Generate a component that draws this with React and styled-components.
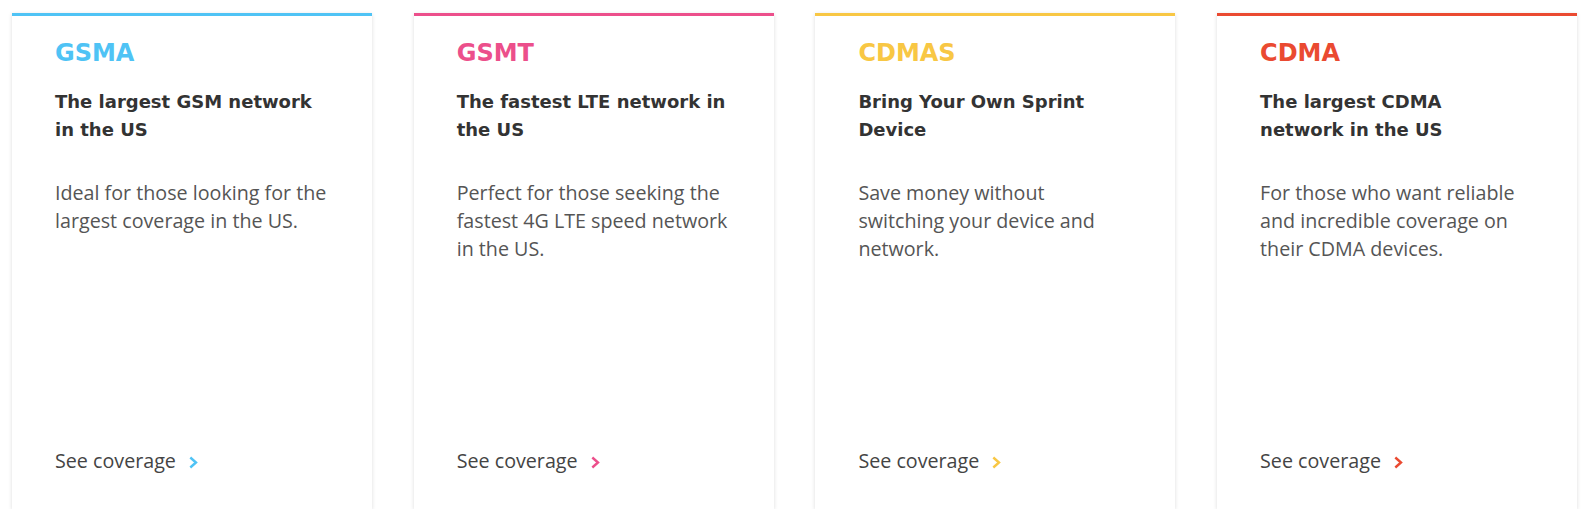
import React from 'react'
import styled, { createGlobalStyle } from 'styled-components'

const GlobalStyle = createGlobalStyle`
  body {
    margin: 0;
    background: #fff;
  }
`

const Row = styled.div`
  display: grid;
  grid-template-columns: repeat(4, 360px);
  column-gap: 41.7px;
  padding: 13px 12px 0 12px;
`

const Card = styled.div`
  box-sizing: border-box;
  height: 496px;
  display: flex;
  flex-direction: column;
  padding: 22px 30px 34px 43px;
  background: #fff;
  border-top: 3px solid ${(p) => p.accent};
  box-shadow: 0 1px 4px rgba(0, 0, 0, 0.14);
`

const Title = styled.div`
  font-family: "DejaVu Sans", sans-serif;
  font-weight: 700;
  font-size: 24px;
  line-height: 30px;
  color: ${(p) => p.accent};
`

const Heading = styled.div`
  margin-top: 20px;
  font-family: "DejaVu Sans", sans-serif;
  font-weight: 700;
  font-size: 18px;
  line-height: 28px;
  color: #333;
  white-space: nowrap;
`

const Text = styled.p`
  margin: 35px 0 0;
  font-family: "Open Sans", sans-serif;
  font-size: 19.7px;
  line-height: 28px;
  color: #555;
  white-space: nowrap;
`

const Line = styled.span`
  display: block;
`

const Link = styled.a`
  margin-top: auto;
  display: flex;
  align-items: center;
  gap: 12px;
  font-family: "Open Sans", sans-serif;
  font-size: 19.7px;
  line-height: 28px;
  color: #444;
  text-decoration: none;
  cursor: pointer;
`

const Chevron = ({ color }) => (
  <svg width="11" height="13" viewBox="0 0 11 13" style={{ marginTop: 2 }}>
    <path d="M2.3 1.5 L8 6.5 L2.3 11.5" fill="none" stroke={color} strokeWidth="2.4" />
  </svg>
)

const plans = [
  {
    name: 'GSMA',
    color: '#4fc3f5',
    heading: ['The largest GSM network', 'in the US'],
    text: ['Ideal for those looking for the', 'largest coverage in the US.'],
  },
  {
    name: 'GSMT',
    color: '#ec4f8b',
    heading: ['The fastest LTE network in', 'the US'],
    text: ['Perfect for those seeking the', 'fastest 4G LTE speed network', 'in the US.'],
  },
  {
    name: 'CDMAS',
    color: '#f8c744',
    heading: ['Bring Your Own Sprint', 'Device'],
    text: ['Save money without', 'switching your device and', 'network.'],
  },
  {
    name: 'CDMA',
    color: '#ea4a31',
    heading: ['The largest CDMA', 'network in the US'],
    text: ['For those who want reliable', 'and incredible coverage on', 'their CDMA devices.'],
  },
]

const App = () => (
  <>
    <GlobalStyle />
    <Row>
      {plans.map((p) => (
        <Card key={p.name} accent={p.color}>
          <Title accent={p.color}>{p.name}</Title>
          <Heading>
            {p.heading.map((l) => <Line key={l}>{l}</Line>)}
          </Heading>
          <Text>
            {p.text.map((l) => <Line key={l}>{l}</Line>)}
          </Text>
          <Link>
            See coverage
            <Chevron color={p.color} />
          </Link>
        </Card>
      ))}
    </Row>
  </>
)

export default App
